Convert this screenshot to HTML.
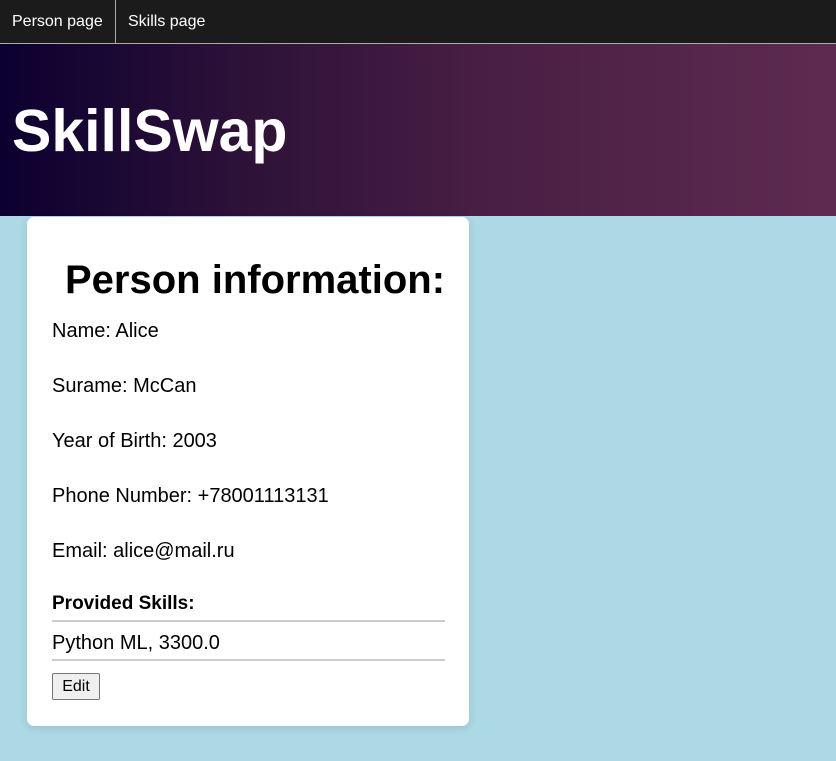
<!DOCTYPE html>
<html><head><style>
body{margin:0;width:836px;height:761px;background:#add8e6;font-family:"Liberation Sans",Arial,sans-serif;position:relative;overflow:hidden}
.nav{position:absolute;left:0;top:0;width:836px;height:43px;background:#1b1b1b;border-bottom:1px solid #aaa}
.nav a{position:absolute;top:0;height:43px;line-height:44px;color:#fff;font-size:16px;text-decoration:none}
.hdr{position:absolute;left:0;top:44px;width:836px;height:172px;background:linear-gradient(90deg,#0b0030,#2e1238 30%,#4a1f45 60%,#5e2b50)}
.hdr h1{position:absolute;left:12px;top:53px;margin:0;font-size:59px;color:#fff;font-weight:bold}
.card{position:absolute;left:27px;top:217px;width:442px;height:509px;background:#fff;border-radius:7px;box-shadow:0 2px 8px rgba(0,0,0,.12)}
.t{position:absolute;left:52px;font-size:20px;color:#000;white-space:nowrap}
hr{position:absolute;left:52px;width:393px;margin:0;border:0;height:2px;background:#ccc}
</style></head><body>
<div class="nav"><a style="left:12px">Person page</a><div style="position:absolute;left:115px;top:0;width:1px;height:44px;background:#aaa"></div><a style="left:128px">Skills page</a></div>
<div class="hdr"><h1>SkillSwap</h1></div>
<div class="card"></div>
<div class="t" style="left:65px;top:258px;font-size:40px;font-weight:bold">Person information:</div>
<div class="t" style="top:320px">Name: Alice</div>
<div class="t" style="top:375px">Surame: McCan</div>
<div class="t" style="top:430px">Year of Birth: 2003</div>
<div class="t" style="top:485px">Phone Number: +78001113131</div>
<div class="t" style="top:540px">Email: alice@mail.ru</div>
<div class="t" style="top:593px;font-weight:bold;font-size:19px">Provided Skills:</div>
<hr style="top:620px">
<div class="t" style="top:632px">Python ML, 3300.0</div>
<hr style="top:659px">
<div style="position:absolute;left:52px;top:673px;width:46px;height:25px;border:1px solid #767676;border-radius:2px;background:#efefef;font-size:16px;line-height:25px;text-align:center">Edit</div>
</body></html>
